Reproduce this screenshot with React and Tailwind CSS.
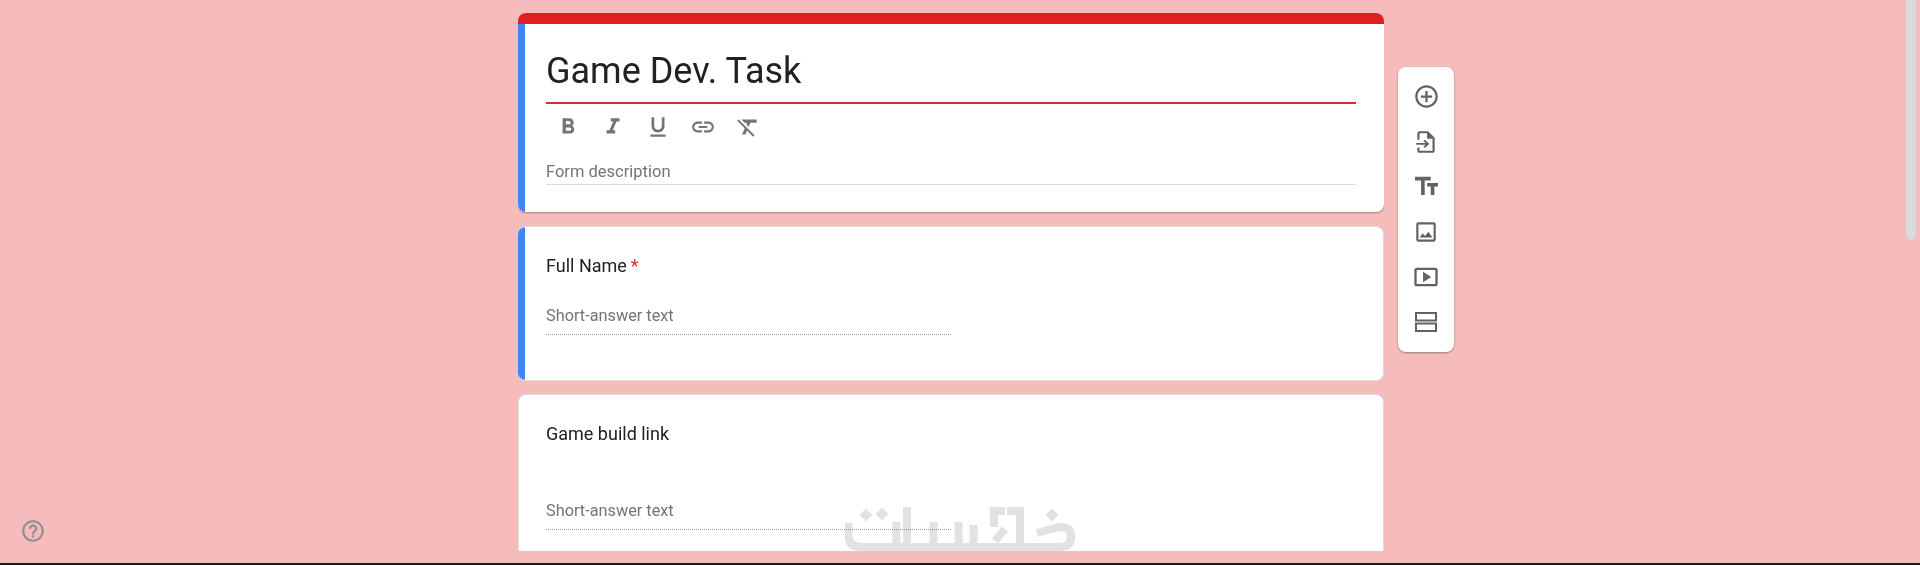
import React from 'react';
import {
  MdFormatBold,
  MdFormatItalic,
  MdFormatUnderlined,
  MdLink,
  MdFormatClear,
  MdAddCircleOutline,
  MdTextFields,
  MdOutlineImage,
  MdOutlineSmartDisplay,
  MdHelpOutline,
} from 'react-icons/md';

// Import-questions icon, the package has no matching one
function ImportIcon() {
  return (
    <svg width="26" height="26" viewBox="0 0 24 24" fill="#5f6368">
      <path d="M14 2H6a2 2 0 0 0-2 2v6h2V4h7v5h5v11H6v-3H4v3a2 2 0 0 0 2 2h12a2 2 0 0 0 2-2V8l-6-6z" />
      <path d="M3 13h8.6l-2-2L11 10l4 3.8-4 3.8-1.400-1.200 2-1.900H3z" />
    </svg>
  );
}

// Two plain stacked sections
function SectionIcon() {
  return (
    <svg width="24" height="24" viewBox="0 0 24 24" fill="none" stroke="#5f6368" strokeWidth="2">
      <rect x="2" y="3" width="20" height="7.500" />
      <rect x="2" y="13.500" width="20" height="7.500" />
    </svg>
  );
}

// Watermark logo in the bottom of the page
function Watermark() {
  return (
    <svg width="232" height="46" viewBox="0 0 232 46" fill="none" stroke="#e2e2e2" strokeWidth="8">
      <path d="M3.500 18V30Q3.500 42 16 42H180" />
      <path d="M51.500 17V42M62 2V42M88.500 17V42M113.500 17V42M128.500 20V42" />
      <path d="M149 2V22M145 6H160M162 6H175V42M150 36L160 24" />
      <path d="M175 42H214Q226 42 226 32V30Q226 22 214 22L192 28" />
      <path d="M21 3.500l6.500 6.500-6.500 6.500-6.500-6.500zM37 2.500l6.500 6.500-6.500 6.500-6.500-6.500zM207 3.500l6.500 6.500-6.500 6.500-6.500-6.500z" fill="#e2e2e2" stroke="none" />
    </svg>
  );
}

function QuestionCard({ title, required, active, bodyClass, labelClass }) {
  return (
    <div className={`bg-white rounded-lg border border-[#dadce0] overflow-hidden flex ${active ? 'border-l-0' : ''} ${bodyClass}`}>
      {active && <div className="w-[7px] shrink-0 bg-[#4285f4]" />}
      <div className={`flex-1 ${active ? 'pl-[21px]' : 'pl-[27px]'}`}>
        <div className={`text-[18px] leading-6 text-[#202124] ${labelClass}`}>
          {title}
          {required && <span className="text-[#d93025] ml-1">*</span>}
        </div>
        <div className="text-[16.3px] leading-6 text-[#70757a]">Short-answer text</div>
        <div className="border-b border-dotted border-[#9a9a9a] w-[405px] mt-[6px]" />
      </div>
    </div>
  );
}

const sideIcons = [
  <MdAddCircleOutline key="add" size={27} color="#5f6368" />,
  <ImportIcon key="import" />,
  <MdTextFields key="title" size={29} color="#5f6368" />,
  <MdOutlineImage key="image" size={26} color="#5f6368" />,
  <MdOutlineSmartDisplay key="video" size={28} color="#5f6368" />,
  <SectionIcon key="section" />,
];

const formatIcons = [MdFormatBold, MdFormatItalic, MdFormatUnderlined, MdLink, MdFormatClear];

export default function App() {
  return (
    <div className="relative h-[565px] overflow-hidden bg-[#f6bbbb] font-['Roboto',sans-serif]">
      <div className="h-[563px] overflow-hidden pt-[13px] pl-[518px] flex gap-[14px] items-start">
        {/* Form column */}
        <div className="w-[866px] shrink-0 flex flex-col gap-[14px] h-[538px] overflow-hidden">
          <div className="h-[199px] shrink-0 bg-white rounded-lg overflow-hidden flex flex-col shadow-[0_1px_2px_rgba(60,64,67,0.45)]">
            <div className="h-[11px] bg-[#e02020]" />
            <div className="flex flex-1">
              <div className="w-[7px] bg-[#4285f4]" />
              <div className="flex-1 pl-[21px] pr-[28px]">
                <div className="text-[36px] leading-[44px] text-[#202124] pt-[25px] pb-[9px]">Game Dev. Task</div>
                <div className="h-[2px] bg-[#d32f2f]" />
                <div className="flex gap-[19px] pl-[9px] pt-[10px] text-[#70757a]">
                  {formatIcons.map((Icon, i) => (
                    <Icon key={i} size={26} />
                  ))}
                </div>
                <div className="text-[16.5px] leading-6 text-[#70757a] pt-[20px]">Form description</div>
                <div className="border-b border-[#dadce0]" />
              </div>
            </div>
          </div>

          <QuestionCard title="Full Name" required active bodyClass="h-[155px] shrink-0" labelClass="pt-[27px] pb-[26px]" />
          <QuestionCard title="Game build link" bodyClass="h-[180px] shrink-0 mt-[-1px]" labelClass="pt-[27px] pb-[53px]" />
        </div>

        {/* Floating toolbar */}
        <div className="mt-[54px] w-[56px] h-[285px] bg-white rounded-lg pt-[7px] shadow-[0_1px_2px_rgba(60,64,67,0.5)]">
          {sideIcons.map((icon) => (
            <div key={icon.key} className="h-[45px] flex items-center justify-center">
              {icon}
            </div>
          ))}
        </div>
      </div>
      <div className="h-[2px] bg-[#1c1c1c]" />

      {/* Overlays */}
      <div className="absolute left-[845px] top-[505px] h-[46px] overflow-hidden mix-blend-multiply">
        <Watermark />
      </div>
      <div className="absolute left-[20px] top-[518px] text-[#8f8f8f]">
        <MdHelpOutline size={26} />
      </div>
      <div className="absolute right-[4px] top-0 w-[10px] h-[240px] rounded-b-full bg-[#d9dade]" />
    </div>
  );
}
